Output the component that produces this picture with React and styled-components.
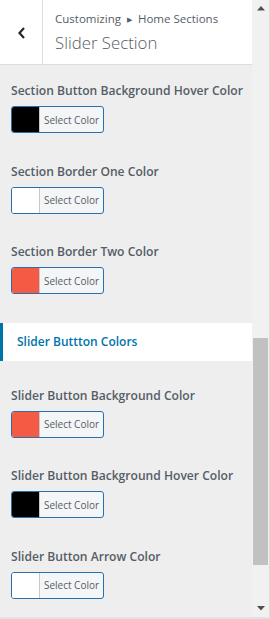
import React from 'react'
import styled, { createGlobalStyle } from 'styled-components'

const GlobalStyle = createGlobalStyle`
  html, body {
    margin: 0;
    padding: 0;
    background: #f1f1f1;
  }
  * {
    box-sizing: border-box;
  }
`

const Frame = styled.div`
  display: flex;
  width: 270px;
  height: 619px;
  overflow: hidden;
  background: #eeeeee;
  border-bottom: 2px solid #e2e2e2;
  font-family: "Open Sans", "Noto Sans", sans-serif;
`

const Panel = styled.div`
  width: 252px;
  flex-shrink: 0;
  display: flex;
  flex-direction: column;

  & > * {
    flex-shrink: 0;
  }
`

const Header = styled.div`
  display: flex;
  height: 65px;
  background: #fff;
  border-bottom: 1px solid #dddddd;
`

const BackButton = styled.div`
  width: 43px;
  flex-shrink: 0;
  display: flex;
  align-items: center;
  justify-content: center;
  border-right: 1px solid #dddddd;
  color: #23282d;
  padding-top: 2px;
`

const Titles = styled.div`
  display: flex;
  flex-direction: column;
  padding: 10px 0 0 12px;
`

const Crumb = styled.span`
  font-size: 11.5px;
  line-height: 17px;
  color: #555d66;
`

const Arrowhead = styled.span`
  display: inline-block;
  font-size: 7px;
  margin: 0 6px;
  vertical-align: 1px;
`

const Title = styled.span`
  font-size: 16.8px;
  font-weight: 300;
  line-height: 26px;
  margin-top: 2px;
  color: #555d66;
`

const Controls = styled.div`
  display: flex;
  flex-direction: column;
  padding: ${({ $top }) => $top}px 11px 0;
`

const Control = styled.div`
  display: flex;
  flex-direction: column;
  gap: 5px;
  margin-bottom: 28.5px;
`

const Label = styled.span`
  font-size: 12.1px;
  font-weight: 600;
  line-height: 20px;
  color: #555d66;
  white-space: nowrap;
`

const ColorButton = styled.div`
  display: flex;
  width: 93px;
  height: 27px;
  border: 1px solid #2a6fa8;
  border-radius: 3px;
  overflow: hidden;
  background: #f3f5f6;
`

const Swatch = styled.span`
  width: 28px;
  flex-shrink: 0;
  background: ${({ $color }) => $color};
  border-right: 1px solid #c5c8cc;
`

const ButtonText = styled.span`
  flex: 1;
  display: flex;
  align-items: center;
  justify-content: center;
  font-size: 10px;
  color: #555d66;
`

const SectionTitle = styled.div`
  height: 38px;
  display: flex;
  align-items: center;
  padding-left: 14px;
  background: #fff;
  border-left: 3px solid #0073aa;
  color: #0073aa;
  font-size: 12px;
  font-weight: 600;
`

const Scrollbar = styled.div`
  width: 18px;
  flex-shrink: 0;
  display: flex;
  flex-direction: column;
  align-items: center;
  background: #f1f1f1;
  border-right: 1px solid #dcdcdc;
`

const Arrow = styled.div`
  height: 17px;
  flex-shrink: 0;
  display: flex;
  align-items: center;
  justify-content: center;
  color: #505050;
`

const Track = styled.div`
  flex: 1;
  width: 100%;
  display: flex;
  flex-direction: column;
  padding: 321px 1px 0 1px;
`

const Thumb = styled.div`
  height: 227px;
  background: #c1c1c1;
`

const Chevron = () => (
  <svg width="9" height="14" viewBox="0 0 9 14">
    <path d="M7 2 L2.5 7 L7 12" fill="none" stroke="currentColor" strokeWidth="2.2" />
  </svg>
)

const Tri = ({ down }) => (
  <svg width="8" height="5" viewBox="0 0 8 5">
    <path d={down ? 'M0 0 H8 L4 4.5 Z' : 'M4 0 L8 4.5 H0 Z'} fill="currentColor" />
  </svg>
)

const sectionControls = [
  { label: 'Section Button Background Hover Color', color: '#000' },
  { label: 'Section Border One Color', color: '#fff' },
  { label: 'Section Border Two Color', color: '#f55a45' },
]

const sliderControls = [
  { label: 'Slider Button Background Color', color: '#f55a45' },
  { label: 'Slider Button Background Hover Color', color: '#000' },
  { label: 'Slider Button Arrow Color', color: '#fff' },
]

const ColorControl = ({ label, color }) => (
  <Control>
    <Label>{label}</Label>
    <ColorButton>
      <Swatch $color={color} />
      <ButtonText>Select Color</ButtonText>
    </ColorButton>
  </Control>
)

const App = () => (
  <>
    <GlobalStyle />
    <Frame>
      <Panel>
        <Header>
          <BackButton>
            <Chevron />
          </BackButton>
          <Titles>
            <Crumb>
              Customizing<Arrowhead>▶</Arrowhead>Home Sections
            </Crumb>
            <Title>Slider Section</Title>
          </Titles>
        </Header>

        <Controls $top={16}>
          {sectionControls.map((c) => (
            <ColorControl key={c.label} {...c} />
          ))}
        </Controls>

        <SectionTitle>Slider Buttton Colors</SectionTitle>

        <Controls $top={25}>
          {sliderControls.map((c) => (
            <ColorControl key={c.label} {...c} />
          ))}
        </Controls>
      </Panel>

      <Scrollbar>
        <Arrow>
          <Tri />
        </Arrow>
        <Track>
          <Thumb />
        </Track>
        <Arrow>
          <Tri down />
        </Arrow>
      </Scrollbar>
    </Frame>
  </>
)

export default App
